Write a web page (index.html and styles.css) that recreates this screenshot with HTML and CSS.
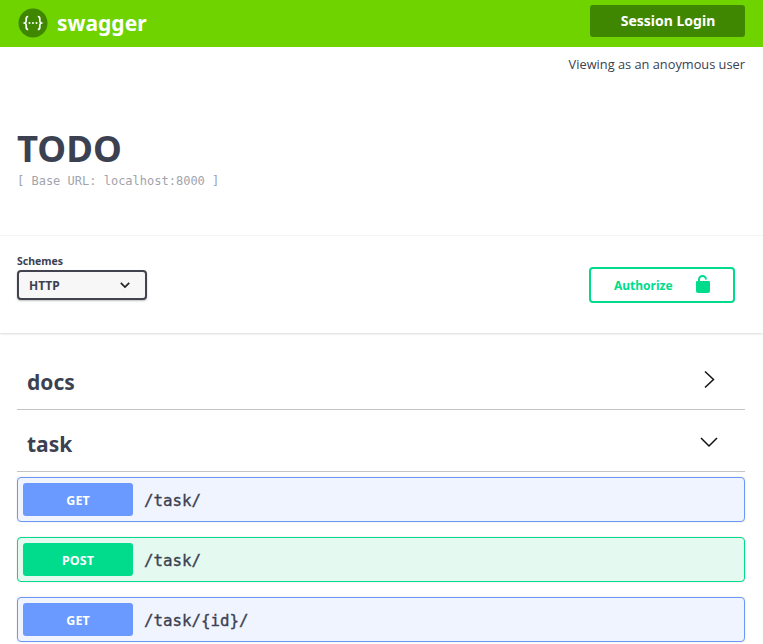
FILE: index.html
```html
<!DOCTYPE html>
<html lang="en">
<head>
<meta charset="utf-8">
<title>TODO - Swagger</title>
<link rel="stylesheet" href="styles.css">
</head>
<body>
<header class="topbar">
  <a class="brand">
    <svg class="brand-logo" viewBox="0 0 30 30" width="30" height="30" aria-hidden="true">
      <circle cx="15" cy="15" r="14.500" fill="#3f8700"/>
      <path d="M10.200 8.500c-1.800 0-2 1-2 2.300v1.900c0 1.200-.5 1.900-1.500 2.300 1 .4 1.500 1.100 1.500 2.300v1.900c0 1.300.2 2.300 2 2.300M19.800 8.500c1.800 0 2 1 2 2.300v1.900c0 1.200.5 1.900 1.500 2.300-1 .4-1.500 1.100-1.500 2.300v1.900c0 1.300-.2 2.300-2 2.300" fill="none" stroke="#fff" stroke-width="1.700"/>
      <circle cx="11.500" cy="15" r="1" fill="#fff"/><circle cx="15" cy="15" r="1" fill="#fff"/><circle cx="18.500" cy="15" r="1" fill="#fff"/>
    </svg>
    <span class="brand-name">swagger</span>
  </a>
  <button class="session-btn">Session Login</button>
</header>
<p class="viewer">Viewing as an anoymous user</p>
<section class="info">
  <h1 class="title">TODO</h1>
  <p class="base-url">[ Base URL: localhost:8000 ]</p>
</section>
<section class="schemes">
  <div class="scheme-field">
    <span class="scheme-label">Schemes</span>
    <div class="scheme-select">
      <span>HTTP</span>
      <svg viewBox="0 0 20 20" width="14" height="14" aria-hidden="true"><path d="M4 7l6 6 6-6" fill="none" stroke="#222" stroke-width="2.400"/></svg>
    </div>
  </div>
  <button class="authorize">
    <span>Authorize</span>
    <svg viewBox="0 0 20 20" width="20" height="20" aria-hidden="true"><path d="M4 6h12a1 1 0 0 1 1 1v9a2 2 0 0 1-2 2H5a2 2 0 0 1-2-2V7a1 1 0 0 1 1-1z" fill="#00dc8c"/><path d="M6 6.500V4.500a3.500 3.500 0 0 1 7 0" fill="none" stroke="#00dc8c" stroke-width="2"/></svg>
  </button>
</section>
<main class="ops">
  <div class="tag">
    <h2 class="tag-name">docs</h2>
    <svg class="arrow" viewBox="0 0 20 20" width="20" height="20" aria-hidden="true"><path d="M6 2l8.500 8L6 18" transform="translate(0 -.5)" fill="none" stroke="#111" stroke-width="1.500"/></svg>
  </div>
  <div class="tag">
    <h2 class="tag-name">task</h2>
    <svg class="arrow" viewBox="0 0 20 20" width="20" height="20" aria-hidden="true"><path d="M2 6l8 8 8-8" fill="none" stroke="#111" stroke-width="1.500"/></svg>
  </div>
  <div class="op op-get"><span class="method">GET</span><span class="path">/task/</span></div>
  <div class="op op-post"><span class="method">POST</span><span class="path">/task/</span></div>
  <div class="op op-get"><span class="method">GET</span><span class="path">/task/{id}/</span></div>
</main>
</body>
</html>
```
FILE: styles.css
```css
* { box-sizing: border-box; }
html, body { margin: 0; padding: 0; background: #fff; overflow: hidden; }
body { font-family: "Open Sans", sans-serif; color: #3b4151; height: 644px; }

.topbar {
  height: 47px;
  background: #6fd300;
  display: flex;
  align-items: center;
  justify-content: space-between;
  padding: 0 18px;
}
.brand { display: flex; align-items: center; gap: 9px; }
.brand-logo { display: block; margin-top: -1px; }
.brand-name { font-family: "Noto Sans", sans-serif; font-weight: 700; font-size: 21px; color: #fff; position: relative; top: -1px; }
.session-btn {
  width: 155px;
  height: 32px;
  margin-top: -5px;
  background: #3f8700;
  border: 0;
  border-radius: 3px;
  color: #fff;
  font-family: "Noto Sans", sans-serif;
  font-weight: 700;
  font-size: 14px;
  text-align: center;
  padding: 0 0 2px 1px;
}

.viewer {
  margin: 0;
  padding: 8px 18px 0 0;
  height: 34px;
  text-align: right;
  font-size: 12.800px;
  line-height: 18px;
}

.info { height: 155px; padding: 45px 17px 0; border-bottom: 1px solid #f7f7f7; }
.title {
  margin: 0;
  font-family: "Noto Sans", sans-serif;
  font-size: 36.500px;
  line-height: 44px;
  font-weight: 700;
}
.base-url {
  margin: 4px 0 0;
  font-family: "DejaVu Sans Mono", monospace;
  font-size: 12px;
  line-height: 14px;
  color: #a0a4ad;
}

.schemes {
  height: 97px;
  padding: 18px 28px 0 17px;
  display: flex;
  justify-content: space-between;
  align-items: flex-start;
  box-shadow: 0 1px 2px rgba(0,0,0,.15);
}
.scheme-field { display: flex; flex-direction: column; }
.scheme-label { font-family: "Noto Sans", sans-serif; font-size: 10.500px; line-height: 14px; font-weight: 700; margin-bottom: 2px; }
.scheme-select {
  width: 130px;
  height: 30px;
  border: 2px solid #41444e;
  border-radius: 4px;
  background: #f7f7f7;
  box-shadow: 0 1px 2px rgba(0,0,0,.25);
  display: flex;
  align-items: center;
  justify-content: space-between;
  padding: 0 13px 0 10px;
  font-family: "Noto Sans", sans-serif;
  font-size: 12px;
  font-weight: 700;
}
.authorize {
  margin-top: 13px;
  width: 146px;
  height: 36px;
  border: 2px solid #00dc8c;
  border-radius: 4px;
  background: #fff;
  color: #00dc8c;
  font-family: "Noto Sans", sans-serif;
  font-size: 12px;
  font-weight: 700;
  display: flex;
  align-items: center;
  padding: 0 20px 0 23px;
  justify-content: space-between;
}

.ops { padding: 15px 18px 0 17px; }
.tag {
  height: 62px;
  border-bottom: 1px solid #c4c4c8;
  display: flex;
  align-items: center;
  justify-content: space-between;
  padding: 6px 26px 0 10px;
}
.tag svg { margin-top: -3px; }
.tag-name { margin: 0; font-family: "Noto Sans", sans-serif; font-size: 21px; font-weight: 700; }

.op {
  height: 45px;
  margin-bottom: 15px;
  border: 1px solid;
  border-radius: 4px;
  display: flex;
  align-items: center;
  padding: 0 5px;
  box-shadow: 0 0 2px rgba(0,0,0,.12);
}
.tag + .op { margin-top: 5px; }
.op-get { background: #eff4fe; border-color: #6b98f8; }
.op-post { background: #e4f9f0; border-color: #00dc8c; }
.method {
  width: 110px;
  height: 33px;
  border-radius: 3px;
  color: #fff;
  font-family: "Noto Sans", sans-serif;
  font-size: 12.500px;
  font-weight: 700;
  line-height: 36px;
  text-align: center;
}
.op-get .method { background: #6a99ff; }
.op-post .method { background: #00dc8c; }
.path {
  margin: 2px 0 0 11px;
  font-family: "DejaVu Sans Mono", monospace;
  font-size: 15.800px;
  color: #3b4151;
  -webkit-text-stroke: .35px #3b4151;
}
```
